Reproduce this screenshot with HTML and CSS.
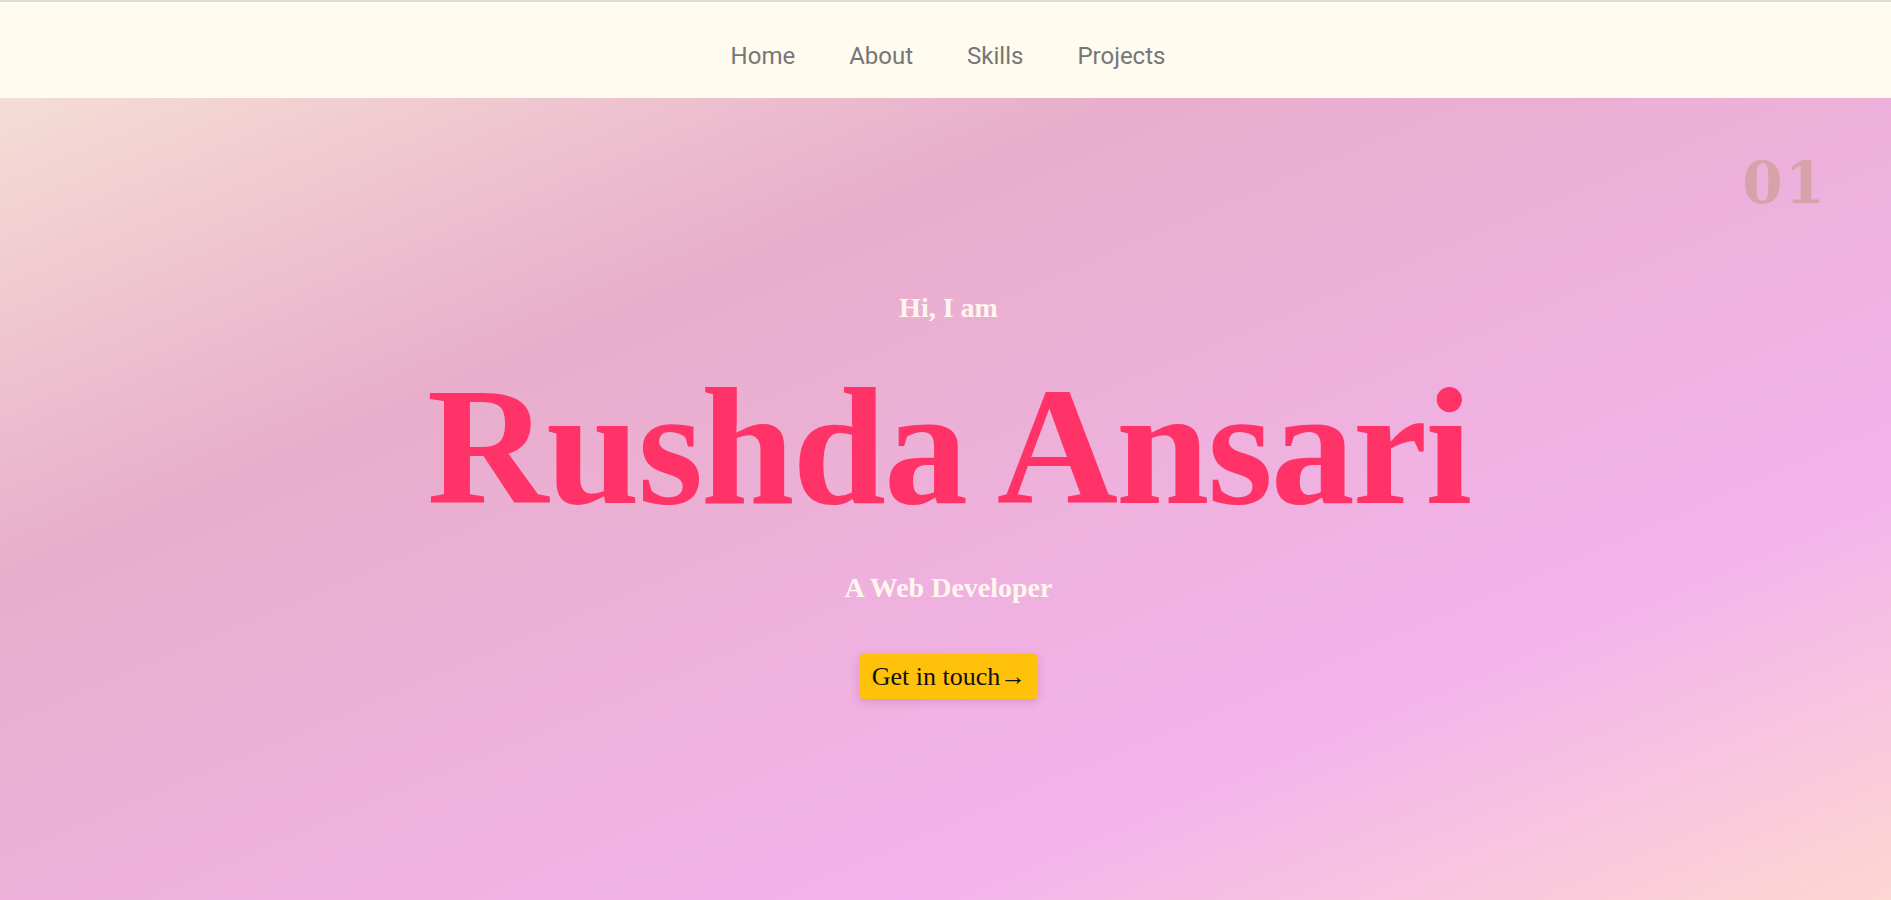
FILE: index.html
```html
<!DOCTYPE html>
<html lang="en">
<head>
<meta charset="utf-8">
<title>Rushda Ansari</title>
<link rel="stylesheet" href="styles.css">
</head>
<body>
<header class="topbar">
  <nav class="nav">
    <a class="nav-link" href="#home">Home</a>
    <a class="nav-link" href="#about">About</a>
    <a class="nav-link" href="#skills">Skills</a>
    <a class="nav-link" href="#projects">Projects</a>
  </nav>
</header>
<section class="hero" id="home">
  <span class="section-no">01</span>
  <p class="greet">Hi, I am</p>
  <h1 class="name">Rushda Ansari</h1>
  <p class="role">A Web Developer</p>
  <a class="cta" href="#contact">Get in touch→</a>
</section>
</body>
</html>
```
FILE: styles.css
```css
* { box-sizing: border-box; }
html, body { margin: 0; padding: 0; }
body {
  font-family: "Liberation Serif", serif;
  width: 1891px;
  height: 900px;
  overflow: hidden;
}
.topbar {
  height: 98px;
  border-top: 2px solid #dcdcd6;
  background: #fffbef;
  padding: 42px 0 0 5px;
}
.nav {
  display: flex;
  justify-content: center;
  gap: 54px;
}
.nav-link {
  font-family: Roboto, sans-serif;
  font-size: 24px;
  line-height: 1;
  color: #767676;
  text-decoration: none;
}
.hero {
  position: relative;
  height: 802px;
  display: flex;
  flex-direction: column;
  align-items: center;
  padding: 196px 0 0 6px;
  background: linear-gradient(to bottom right, #f5ddd5 0%, #e8aecb 30%, #f4b3ec 74%, #fdd7d2 100%);
}
.section-no {
  position: absolute;
  top: 56px;
  right: 64px;
  font-family: "DejaVu Serif", serif;
  font-weight: bold;
  font-size: 58px;
  line-height: 1;
  letter-spacing: 2px;
  color: #d7a2aa;
}
.greet, .role {
  margin: 0;
  font-size: 28px;
  line-height: 1;
  font-weight: bold;
  color: #fff7ee;
}
.name {
  margin: 40px 0 0;
  font-size: 168px;
  line-height: 1;
  font-weight: bold;
  letter-spacing: -2px;
  color: #ff3368;
}
.role { margin-top: 44px; }
.cta {
  margin-top: 52px;
  height: 45px;
  display: inline-flex;
  align-items: center;
  padding: 0 12px 0 13px;
  background: #ffc10a;
  color: #111;
  font-size: 26px;
  line-height: 1;
  border-radius: 5px;
  text-decoration: none;
  box-shadow: 0 3px 8px rgba(150, 60, 110, 0.25);
}
```
